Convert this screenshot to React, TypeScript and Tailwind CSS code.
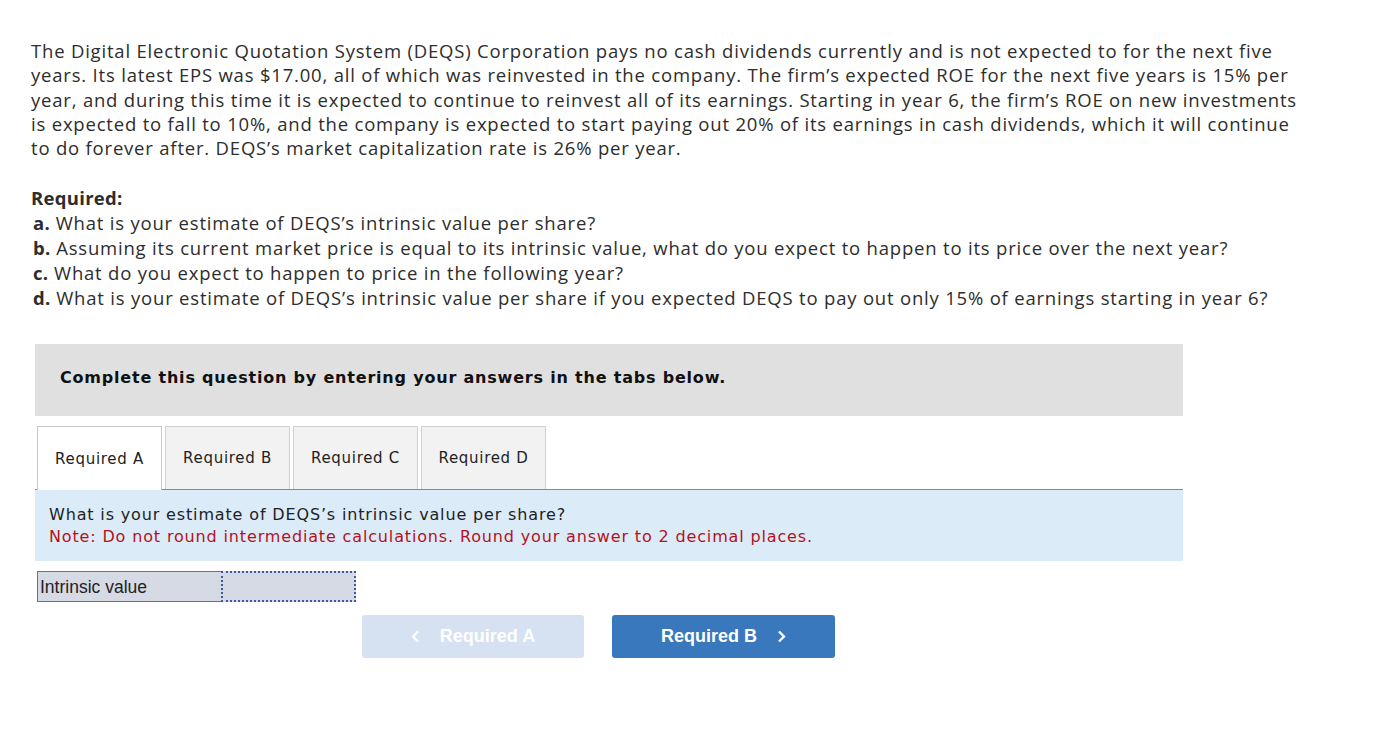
import React from "react";

const para = [
  "The Digital Electronic Quotation System (DEQS) Corporation pays no cash dividends currently and is not expected to for the next five",
  "years. Its latest EPS was $17.00, all of which was reinvested in the company. The firm\u2019s expected ROE for the next five years is 15% per",
  "year, and during this time it is expected to continue to reinvest all of its earnings. Starting in year 6, the firm\u2019s ROE on new investments",
  "is expected to fall to 10%, and the company is expected to start paying out 20% of its earnings in cash dividends, which it will continue",
  "to do forever after. DEQS\u2019s market capitalization rate is 26% per year.",
];

const reqs: [string, string][] = [
  ["a.", "What is your estimate of DEQS\u2019s intrinsic value per share?"],
  ["b.", "Assuming its current market price is equal to its intrinsic value, what do you expect to happen to its price over the next year?"],
  ["c.", "What do you expect to happen to price in the following year?"],
  ["d.", "What is your estimate of DEQS\u2019s intrinsic value per share if you expected DEQS to pay out only 15% of earnings starting in year 6?"],
];

const tabs = ["Required A", "Required B", "Required C", "Required D"];

export default function App() {
  return (
    <div className="w-[1388px] h-[750px] bg-white text-[#2d2d2d] pt-[39px]">
      <div className="pl-[31px] font-['Open_Sans',sans-serif] text-[18.5px] tracking-[0.8px] leading-[24.3px]">
        {para.map((l, i) => (
          <div key={i} className="whitespace-nowrap">{l}</div>
        ))}
      </div>
      <div className="pl-[31px] mt-[25px] font-['Open_Sans',sans-serif] text-[18.5px] tracking-[0.8px] leading-[25px]">
        <div className="font-bold tracking-[0.3px]">Required:</div>
        {reqs.map(([k, t]) => (
          <div key={k} className="pl-[2px] whitespace-nowrap">
            <span className="font-bold tracking-[0.3px]">{k}</span> {t}
          </div>
        ))}
      </div>

      <div className="ml-[35px] w-[1148px] mt-[34px] h-[72px] bg-[#e0e0e0] flex items-center pl-[25px] pb-[4px] font-['DejaVu_Sans',sans-serif] font-bold text-[16px] tracking-[0.8px] text-[#111]">
        Complete this question by entering your answers in the tabs below.
      </div>

      <div className="ml-[35px] w-[1148px] mt-[11px]">
        <div className="flex items-end border-b border-[#8a8a8a] h-[63px] pl-[2px] gap-[3px]">
          {tabs.map((t, i) => (
            <div
              key={t}
              className={
                i === 0
                  ? "w-[125px] h-[64px] -mb-px bg-white border border-b-0 border-[#c8c8c8] flex items-center justify-center font-['DejaVu_Sans',sans-serif] text-[15px] tracking-[0.7px] text-[#222]"
                  : "w-[125px] h-[63px] bg-[#f2f2f2] border border-b-0 border-[#d0d0d0] flex items-center justify-center font-['DejaVu_Sans',sans-serif] text-[15px] tracking-[0.7px] text-[#222]"
              }
            >
              {t}
            </div>
          ))}
        </div>
        <div className="bg-[#dcebf8] h-[71px] pl-[14px] pt-[14px] font-['DejaVu_Sans',sans-serif] text-[16px] tracking-[0.85px] leading-[22px]">
          <div className="text-[#222]">What is your estimate of DEQS{"\u2019"}s intrinsic value per share?</div>
          <div className="text-[#b3121d]">Note: Do not round intermediate calculations. Round your answer to 2 decimal places.</div>
        </div>
      </div>

      <div className="ml-[37px] mt-[10px] flex h-[31px]">
        <div className="w-[184px] bg-[#d6dae5] border border-[#707070] border-r-0 flex items-center pl-[2px] font-['Liberation_Sans',sans-serif] text-[17.5px] text-[#222]">
          Intrinsic value
        </div>
        <div className="w-[135px] bg-[#d6dae5] border-2 border-dotted border-[#3d5a9e]"></div>
      </div>

      <div className="flex mt-[13px] ml-[362px] gap-[28px]">
        <div className="w-[222px] h-[43px] rounded-[3px] bg-[#d6e2f1] flex items-center justify-center gap-[20px] font-['Liberation_Sans',sans-serif] font-bold text-[18px] text-white">
          <svg width="9" height="13" viewBox="0 0 9 13"><path d="M7 1.5 L2 6.5 L7 11.5" stroke="white" strokeWidth="2.4" fill="none" /></svg>
          <span>Required A</span>
        </div>
        <div className="w-[223px] h-[43px] rounded-[3px] bg-[#3a78be] flex items-center justify-center gap-[20px] font-['Liberation_Sans',sans-serif] font-bold text-[18px] text-white">
          <span>Required B</span>
          <svg width="9" height="13" viewBox="0 0 9 13"><path d="M2 1.5 L7 6.5 L2 11.5" stroke="white" strokeWidth="2.4" fill="none" /></svg>
        </div>
      </div>
    </div>
  );
}
